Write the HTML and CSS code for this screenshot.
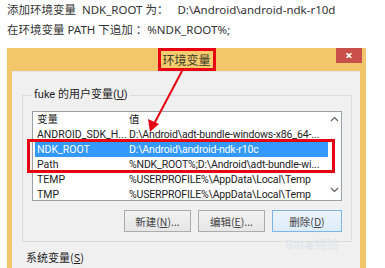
FILE: index.html
```html
<!DOCTYPE html>
<html>
<head>
<meta charset="utf-8">
<link rel="stylesheet" href="styles.css">
</head>
<body>
<div class="intro">
  <p>添加环境变量&nbsp; NDK_ROOT 为：&nbsp;&nbsp; D:\Android\android-ndk-r10d</p>
  <p>在环境变量 PATH 下追加 ：%NDK_ROOT%;</p>
</div>
<div class="window">
  <div class="titlebar">
    <div class="title">环境变量</div>
    <div class="close">×</div>
  </div>
  <div class="panel">
    <fieldset class="group">
      <legend>fuke 的用户变量(<u>U</u>)</legend>
      <div class="list">
        <div class="rows">
          <div class="row head"><span class="c1">变量</span><span class="c2">值</span></div>
          <div class="row"><span class="c1">ANDROID_SDK_H...</span><span class="c2">D:\Android\adt-bundle-windows-x86_64-...</span></div>
          <div class="row sel"><span class="c1">NDK_ROOT</span><span class="c2">D:\Android\android-ndk-r10c</span></div>
          <div class="row"><span class="c1">Path</span><span class="c2">%NDK_ROOT%;D:\Android\adt-bundle-wi...</span></div>
          <div class="row"><span class="c1">TEMP</span><span class="c2">%USERPROFILE%\AppData\Local\Temp</span></div>
          <div class="row"><span class="c1">TMP</span><span class="c2">%USERPROFILE%\AppData\Local\Temp</span></div>
        </div>
        <div class="scroll">
          <svg width="9" height="6" viewBox="0 0 9 6"><path d="M1 5 L4.5 1.5 L8 5" fill="none" stroke="#606060" stroke-width="1.2"/></svg>
          <svg width="9" height="6" viewBox="0 0 9 6"><path d="M1 1 L4.5 4.5 L8 1" fill="none" stroke="#606060" stroke-width="1.2"/></svg>
        </div>
      </div>
      <div class="buttons">
        <button class="btn">新建(<u>N</u>)...</button>
        <button class="btn">编辑(<u>E</u>)...</button>
        <button class="btn def">删除(<u>D</u>)</button>
      </div>
    </fieldset>
    <div class="sys">系统变量(<u>S</u>)</div>
  </div>
  <div class="redbox"></div>
  <svg class="arrow" width="200" height="100" viewBox="0 0 200 100">
    <line x1="175" y1="23" x2="147" y2="76" stroke="#e60012" stroke-width="2"/>
    <polygon points="143,84 141,71 152,76" fill="#e60012"/>
  </svg>
  <div class="watermark">Bai<span class="paw">●</span>经验</div>
</div>
</body>
</html>
```
FILE: styles.css
```css
* { box-sizing: border-box; }
html, body { margin: 0; padding: 0; }
body {
  width: 385px;
  height: 268px;
  overflow: hidden;
  background: #ffffff;
  font-family: "Noto Sans", "Noto Sans CJK SC", sans-serif;
}
.intro {
  padding-left: 7px;
  color: #333333;
  font-size: 11.5px;
}
.intro p {
  margin: 0;
  line-height: 20px;
  white-space: nowrap;
}
.window {
  position: relative;
  margin: 8px 0 0 7px;
  width: 359px;
  height: 220px;
  background: #f2c66b;
  padding: 0 6px 0 5px;
  display: flex;
  flex-direction: column;
}
.titlebar {
  height: 23px;
  display: grid;
  grid-template-columns: 1fr auto 1fr;
  align-items: start;
  margin: 0 -6px 0 -5px;
}
.title {
  grid-column: 2;
  height: 23px;
  width: 58px;
  border: 3px solid #e60012;
  background: #f5cd6e;
  color: #3a3a2a;
  font-family: "Noto Sans CJK SC", sans-serif;
  font-size: 12px;
  line-height: 17px;
  text-align: center;
}
.close {
  grid-column: 3;
  justify-self: end;
  margin-right: 4px;
  width: 26px;
  height: 15px;
  background: #c9504a;
  color: #ffffff;
  font-size: 13px;
  font-weight: bold;
  line-height: 14px;
  text-align: center;
}
.panel {
  flex: 1;
  background: #f0f0f0;
  border-top: 1px solid #e4e4e4;
  padding: 16px 8px 0 10px;
  font-size: 11px;
  color: #1e1e1e;
}
.group {
  margin: 0;
  padding: 9px 9px 9px 9px;
  border: 1px solid #dcdcdc;
  min-width: 0;
}
.group legend {
  padding: 0 2px;
  margin-left: 0;
  line-height: 14px;
  font-family: "Roboto", "Noto Sans CJK SC", sans-serif;
}
.list {
  height: 90px;
  border: 1px solid #9a9fa8;
  background: #ffffff;
  display: flex;
  overflow: hidden;
  font-family: "Roboto", "Noto Sans CJK SC", sans-serif;
  font-size: 10.5px;
  color: #222222;
}
.rows {
  flex: 1;
  min-width: 0;
  padding-left: 2px;
}
.row {
  height: 15px;
  line-height: 15px;
  display: flex;
  white-space: nowrap;
  overflow: hidden;
}
.row.head { height: 15px; }
.c1 { width: 94px; padding-left: 2px; flex: none; overflow: hidden; }
.c2 { flex: 1; min-width: 0; overflow: hidden; letter-spacing: -0.15px; }
.row.sel { background: #3399ff; color: #ffffff; }
.scroll {
  width: 13px;
  flex: none;
  display: flex;
  flex-direction: column;
  justify-content: space-between;
  align-items: center;
  padding: 4px 0 7px;
}
.buttons {
  margin-top: 9px;
  display: flex;
  justify-content: flex-end;
  gap: 7px;
}
.btn {
  width: 67px;
  height: 22px;
  border: 1px solid #acacac;
  background: linear-gradient(#f2f2f2, #e6e6e6);
  font-family: "Noto Sans CJK SC", "Noto Sans", sans-serif;
  font-size: 10.5px;
  color: #444444;
  padding: 0;
}
.btn.def { border-color: #7eb4ea; background: linear-gradient(#ecf4fc, #dcecfc); width: 70px; }
.sys {
  margin-top: 8px;
  padding-left: 4px;
  line-height: 14px;
  font-family: "Noto Sans CJK SC", sans-serif;
}
.redbox {
  position: absolute;
  left: 20px;
  top: 91px;
  width: 308px;
  height: 34px;
  border: 3px solid #e60012;
}
.arrow {
  position: absolute;
  left: 0;
  top: 0;
}
.watermark {
  position: absolute;
  left: 278px;
  top: 187px;
  font-size: 12px;
  font-weight: bold;
  color: rgba(222, 228, 236, 0.7);
  font-family: "Noto Sans", "Noto Sans CJK SC", sans-serif;
}
.paw { font-size: 9px; margin: 0 1px; }
```
